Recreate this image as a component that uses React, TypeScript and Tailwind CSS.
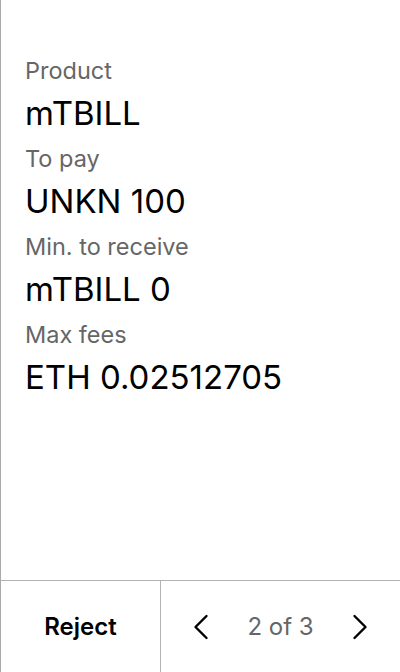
const rows = [
  { label: "Product", value: "mTBILL" },
  { label: "To pay", value: "UNKN 100" },
  { label: "Min. to receive", value: "mTBILL 0" },
  { label: "Max fees", value: "ETH 0.02512705" },
];

function Chevron({ dir }: { dir: "left" | "right" }) {
  return (
    <svg width="20" height="30" viewBox="0 0 20 30" fill="none" stroke="currentColor" strokeWidth="2.4" strokeLinecap="round" strokeLinejoin="round">
      {dir === "left" ? <path d="M15.5 4 L4.5 15 L15.5 26" /> : <path d="M4.5 4 L15.5 15 L4.5 26" />}
    </svg>
  );
}

export default function App() {
  return (
    <div
      className="flex h-[672px] w-[400px] flex-col border-l border-[#aaaaaa] bg-white text-black"
      style={{ fontFamily: "Inter, 'Liberation Sans', sans-serif" }}
    >
      <div className="flex-1 px-6 pt-[56px]">
        {rows.map((r) => (
          <div key={r.label}>
            <div className="h-[30px] text-[23.5px] leading-[30px] text-[#666666]">{r.label}</div>
            <div className="h-[58px] pt-[6px] text-[33px] leading-[42px]">{r.value}</div>
          </div>
        ))}
      </div>
      <div className="flex h-[92px] border-t border-[#b3b3b3]">
        <button className="flex w-[160px] items-center justify-center border-r border-[#b3b3b3] text-[24px] font-semibold">
          Reject
        </button>
        <div className="flex flex-1 items-center justify-between pl-[30px] pr-[30px]">
          <Chevron dir="left" />
          <span className="text-[24px] text-[#666666]">2 of 3</span>
          <Chevron dir="right" />
        </div>
      </div>
    </div>
  );
}
